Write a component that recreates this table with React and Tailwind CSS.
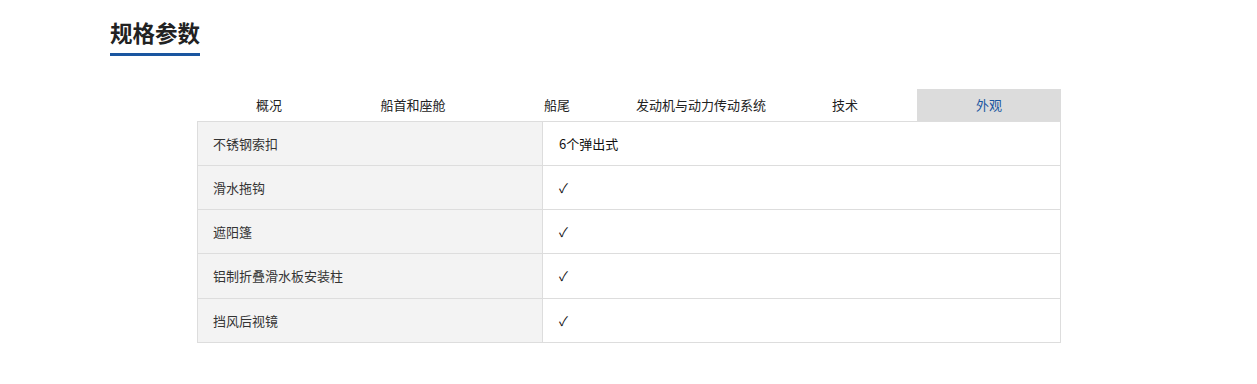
export default function App() {
  const tabs = ["概况", "船首和座舱", "船尾", "发动机与动力传动系统", "技术", "外观"];
  const rows = [
    ["不锈钢索扣", "6个弹出式", 44],
    ["滑水拖钩", "✓", 44],
    ["遮阳篷", "✓", 44],
    ["铝制折叠滑水板安装柱", "✓", 45],
    ["挡风后视镜", "✓", 44],
  ];
  const font = { fontFamily: '"Noto Sans CJK SC", "Noto Sans", sans-serif' };
  return (
    <div className="w-[1257px] h-[384px] bg-white text-[#333]" style={font}>
      <div className="pl-[110px] pt-[16px]">
        <h2 className="inline-block text-[22.5px] leading-[32px] font-bold text-[#222] pb-[5px] border-b-[3px] border-[#1a56a0]">
          规格参数
        </h2>
      </div>
      <div className="w-[864px] ml-[197px] mt-[33px]">
        <div className="grid grid-cols-6 h-[32px]">
          {tabs.map((t, i) => (
            <div
              key={t}
              className={
                i === 5
                  ? "flex items-center justify-center text-[13px] bg-[#dcdcdc] text-[#1a56a0]"
                  : "flex items-center justify-center text-[13px] text-[#222]"
              }
            >
              {t}
            </div>
          ))}
        </div>
        <div className="border border-[#dddddd] border-b-0">
          {rows.map(([k, v, h]) => (
            <div
              key={k}
              className={
                h === 45
                  ? "flex h-[45px] border-b border-[#dddddd]"
                  : "flex h-[44px] border-b border-[#dddddd]"
              }
            >
              <div className="w-[345px] bg-[#f3f3f3] border-r border-[#dddddd] flex items-center pl-[15px] text-[13px]">
                {k}
              </div>
              <div className="flex-1 flex items-center pl-[16px] text-[13px] text-[#111]">{v}</div>
            </div>
          ))}
        </div>
      </div>
    </div>
  );
}
